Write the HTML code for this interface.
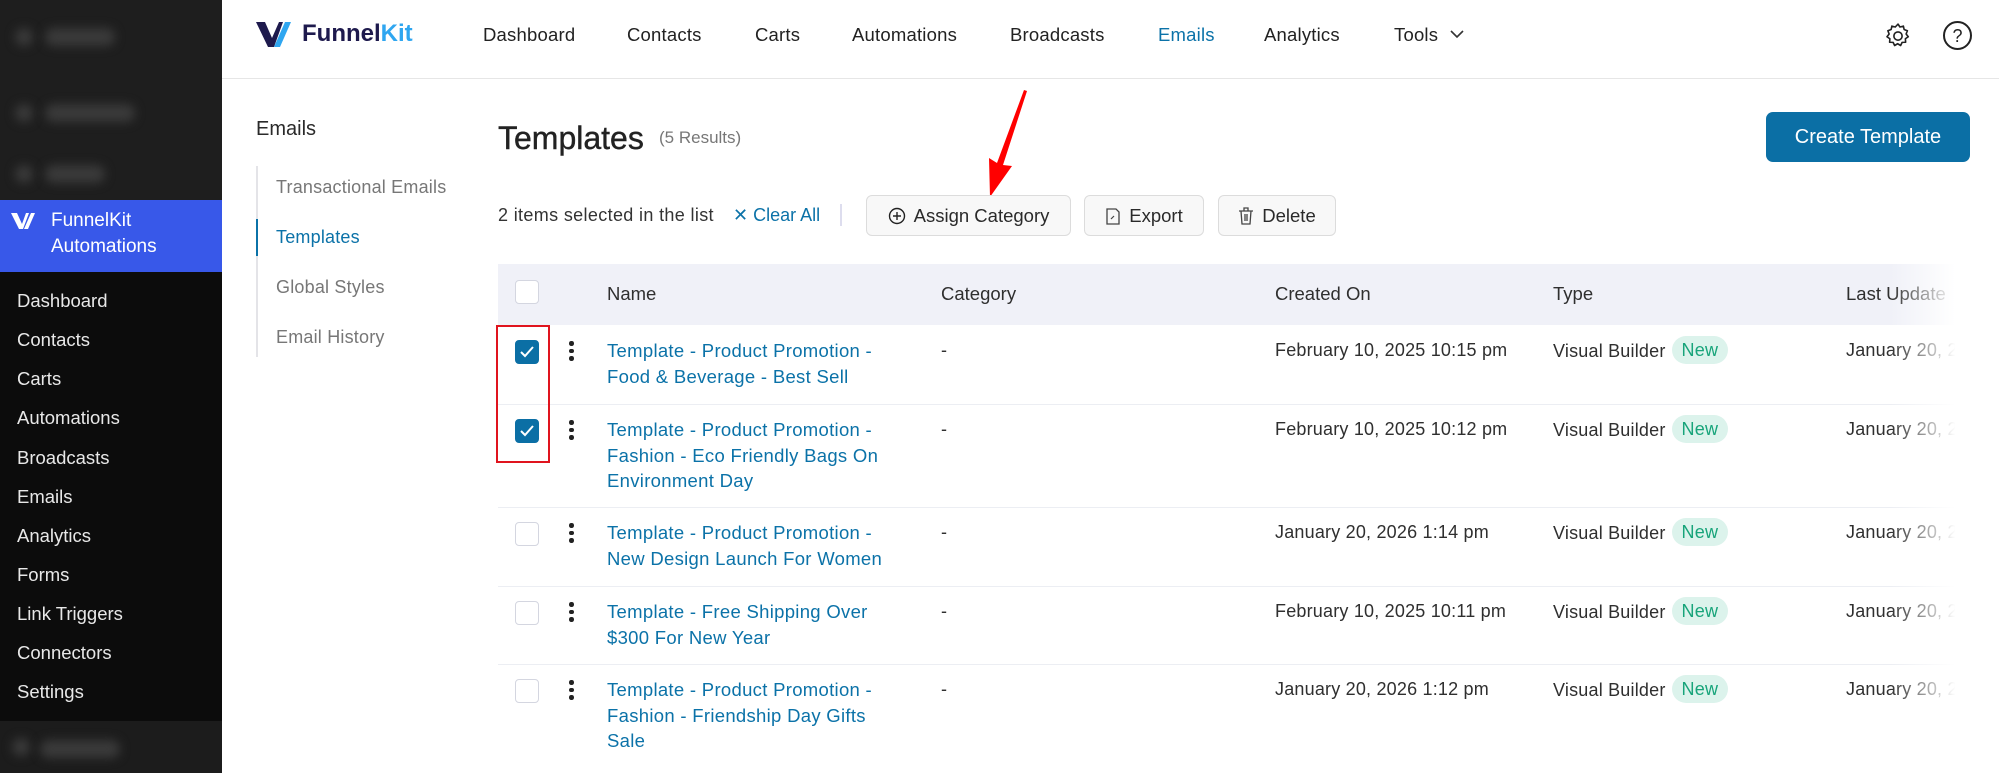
<!DOCTYPE html>
<html><head><meta charset="utf-8"><style>
*{margin:0;padding:0;box-sizing:border-box}
body{width:1999px;height:773px;overflow:hidden;background:#fff;font-family:"Liberation Sans",sans-serif;color:#2f2f2f;position:relative}
.a{position:absolute;white-space:nowrap}
.side{position:absolute;left:0;top:0;width:222px;height:773px;background:#0c0c0c}
.blur{position:absolute;left:0;top:0;width:222px;height:200px;background:#1e1e1e}
.bl{position:absolute;height:18px;border-radius:9px;background:#3a3a3a;filter:blur(5px)}
.band{position:absolute;left:0;top:200px;width:222px;height:72px;background:#3858e9;color:#fff;font-size:19px;line-height:26px}
.mi{position:absolute;left:17px;color:#e8e8e8;font-size:18.5px}
.nav{font-size:18.5px;color:#222;top:24px;letter-spacing:0.2px}
.sub{font-size:18px;color:#777;left:276px;letter-spacing:0.2px}
.btn{position:absolute;top:195px;height:41px;border:1px solid #dcdcdc;border-radius:6px;background:#f8f8f8;font-size:18.5px;color:#2a2a2a;display:flex;align-items:center;justify-content:center;gap:8px}
.th{font-size:18.5px;color:#2f2f2f;top:283px}
.cb{position:absolute;left:515px;width:24px;height:24px;border:1.5px solid #d4d6e0;border-radius:4px;background:#fff}
.cb.on{background:#0b6fa5;border-color:#0b6fa5}
.dots{position:absolute;left:569px;width:5px}
.dots i{display:block;width:4.5px;height:4.5px;border-radius:50%;background:#222;margin-bottom:3px}
.lk{position:absolute;left:607px;color:#0b72a8;font-size:18.5px;line-height:25.5px;letter-spacing:0.3px}
.td{position:absolute;font-size:18px;color:#2f2f2f;line-height:25.5px;letter-spacing:0.2px}
.new{display:inline-block;background:#dcf3ec;color:#17a47a;border-radius:14px;padding:0 10px;height:28px;line-height:28px;margin-left:6px;vertical-align:middle;position:relative;top:-2px}
.sep{position:absolute;left:498px;width:1501px;height:1px;background:#eceef3}
</style></head><body>
<div class="side">
 <div class="blur">
  <div class="bl" style="left:15px;top:28px;width:18px"></div><div class="bl" style="left:45px;top:28px;width:70px"></div>
  <div class="bl" style="left:15px;top:104px;width:18px"></div><div class="bl" style="left:45px;top:104px;width:90px"></div>
  <div class="bl" style="left:15px;top:165px;width:18px"></div><div class="bl" style="left:45px;top:165px;width:60px"></div>
 </div>
 <div class="band">
  <svg class="a" style="left:10px;top:11px" width="28" height="20" viewBox="0 0 28 20"><path d="M1 2h6l5 11L16 2h3l-6 16H9z" fill="#fff"/><path d="M21 2h4l-7 16h-4z" fill="#fff"/></svg>
  <div class="a" style="left:51px;top:8px">FunnelKit</div><div class="a" style="left:51px;top:34px">Automations</div>
 </div>
 <div class="mi" style="top:290px">Dashboard</div>
 <div class="mi" style="top:329px">Contacts</div>
 <div class="mi" style="top:368px">Carts</div>
 <div class="mi" style="top:407px">Automations</div>
 <div class="mi" style="top:447px">Broadcasts</div>
 <div class="mi" style="top:486px">Emails</div>
 <div class="mi" style="top:525px">Analytics</div>
 <div class="mi" style="top:564px">Forms</div>
 <div class="mi" style="top:603px">Link Triggers</div>
 <div class="mi" style="top:642px">Connectors</div>
 <div class="mi" style="top:681px">Settings</div>
 <div style="position:absolute;left:0;top:721px;width:222px;height:52px;background:#1c1c1c"><div class="bl" style="left:12px;top:17px;width:18px"></div><div class="bl" style="left:40px;top:19px;width:80px"></div></div>
</div>
<div style="position:absolute;left:222px;top:78px;width:1777px;height:1px;background:#e6e6e6"></div>
<svg class="a" style="left:256px;top:20px" width="40" height="30" viewBox="0 0 40 30"><path d="M0 2h9l7 16 7-16h4L18 27h-6z" fill="#1e1a4d"/><path d="M29 2h6L24 27h-6z" fill="#2fa6f0"/></svg>
<div class="a" style="left:302px;top:20px;font-size:24px;font-weight:bold;color:#1e1a4d">Funnel<span style="color:#2fa6f0">Kit</span></div>
<div class="a nav" style="left:483px">Dashboard</div>
<div class="a nav" style="left:627px">Contacts</div>
<div class="a nav" style="left:755px">Carts</div>
<div class="a nav" style="left:852px">Automations</div>
<div class="a nav" style="left:1010px">Broadcasts</div>
<div class="a nav" style="left:1158px;color:#0b72a8">Emails</div>
<div class="a nav" style="left:1264px">Analytics</div>
<div class="a nav" style="left:1394px">Tools</div>
<svg class="a" style="left:1449px;top:28px" width="16" height="12"><path d="M2 3l6 6 6-6" stroke="#333" stroke-width="1.6" fill="none"/></svg>
<svg class="a" style="left:1883px;top:21px" width="30" height="30" viewBox="0 0 24 24"><path d="M12 2.5l1.6 2.3 2.7-.7.6 2.7 2.6 1-1 2.6 1.7 2.2-2.3 1.6.2 2.8-2.8.1-1.2 2.5-2.4-1.4-2.4 1.4-1.2-2.5-2.8-.1.2-2.8-2.3-1.6 1.7-2.2-1-2.6 2.6-1 .6-2.7 2.7.7z" fill="none" stroke="#222" stroke-width="1.3" stroke-linejoin="round"/><circle cx="12" cy="12" r="3.3" fill="none" stroke="#222" stroke-width="1.3"/></svg>
<svg class="a" style="left:1942px;top:20px" width="31" height="31" viewBox="0 0 31 31"><circle cx="15.5" cy="15.5" r="13.5" fill="none" stroke="#222" stroke-width="2"/><text x="15.5" y="22" text-anchor="middle" font-family="Liberation Sans" font-size="18" fill="#222">?</text></svg>
<div class="a" style="left:256px;top:118px;font-size:20px;color:#2a2a2a">Emails</div>
<div style="position:absolute;left:256px;top:166px;width:2px;height:191px;background:#e4e4e8"></div>
<div style="position:absolute;left:256px;top:219px;width:2px;height:37px;background:#0b72a8"></div>
<div class="a sub" style="top:177px">Transactional Emails</div>
<div class="a sub" style="top:227px;color:#0b72a8">Templates</div>
<div class="a sub" style="top:277px">Global Styles</div>
<div class="a sub" style="top:327px">Email History</div>
<div class="a" style="left:498px;top:120px;font-size:32px;color:#222;-webkit-text-stroke:0.4px #222">Templates</div>
<div class="a" style="left:659px;top:128px;font-size:17px;color:#777">(5 Results)</div>
<div style="position:absolute;left:1766px;top:112px;width:204px;height:50px;border-radius:7px;background:#0b6fa5;color:#fff;font-size:20px;display:flex;align-items:center;justify-content:center">Create Template</div>
<div class="a" style="left:498px;top:205px;font-size:18px;color:#333;letter-spacing:0.35px">2 items selected in the list</div>
<div class="a" style="left:733px;top:205px;font-size:18px;color:#0b72a8">✕ Clear All</div>
<div style="position:absolute;left:840px;top:204px;width:2px;height:22px;background:#dde"></div>
<div class="btn" style="left:866px;width:205px"><svg width="18" height="18"><circle cx="9" cy="9" r="7.5" fill="none" stroke="#222" stroke-width="1.4"/><path d="M9 5v8M5 9h8" stroke="#222" stroke-width="1.4"/></svg>Assign Category</div>
<div class="btn" style="left:1084px;width:120px"><svg width="16" height="20"><path d="M2 3h9l3 3v12H2z" fill="none" stroke="#444" stroke-width="1.3"/><path d="M6 13l3-3" stroke="#444" stroke-width="1.2"/></svg>Export</div>
<div class="btn" style="left:1218px;width:118px"><svg width="16" height="20"><path d="M1 5h14M6 5V2h4v3M3 5l1 13h8l1-13M7 8v7M9 8v7" fill="none" stroke="#444" stroke-width="1.3"/></svg>Delete</div>
<svg class="a" style="left:970px;top:85px" width="70" height="110"><path d="M54 5L27 78l-8-5 1 39 22-31-9-1L57 6z" fill="#f00"/></svg>
<div style="position:absolute;left:498px;top:264px;width:1501px;height:61px;background:#f0f1f8"></div>
<div class="cb" style="top:280px"></div>
<div class="a th" style="left:607px">Name</div>
<div class="a th" style="left:941px">Category</div>
<div class="a th" style="left:1275px">Created On</div>
<div class="a th" style="left:1553px">Type</div>
<div class="a th" style="left:1846px">Last Update</div>
<div class="sep" style="top:404px"></div><div class="sep" style="top:507px"></div><div class="sep" style="top:586px"></div><div class="sep" style="top:664px"></div>
<div class="cb on" style="top:340px"><svg width="21" height="21"><path d="M5 11l4 4 8-9" stroke="#fff" stroke-width="2" fill="none"/></svg></div>
<div class="cb on" style="top:419px"><svg width="21" height="21"><path d="M5 11l4 4 8-9" stroke="#fff" stroke-width="2" fill="none"/></svg></div>
<div class="cb" style="top:522px"></div><div class="cb" style="top:601px"></div><div class="cb" style="top:679px"></div>
<div class="dots" style="top:341px"><i></i><i></i><i></i></div>
<div class="dots" style="top:420px"><i></i><i></i><i></i></div>
<div class="dots" style="top:523px"><i></i><i></i><i></i></div>
<div class="dots" style="top:602px"><i></i><i></i><i></i></div>
<div class="dots" style="top:680px"><i></i><i></i><i></i></div>
<div class="lk" style="top:338px">Template - Product Promotion -<br>Food &amp; Beverage - Best Sell</div>
<div class="lk" style="top:417px">Template - Product Promotion -<br>Fashion - Eco Friendly Bags On<br>Environment Day</div>
<div class="lk" style="top:520px">Template - Product Promotion -<br>New Design Launch For Women</div>
<div class="lk" style="top:599px">Template - Free Shipping Over<br>$300 For New Year</div>
<div class="lk" style="top:677px">Template - Product Promotion -<br>Fashion - Friendship Day Gifts<br>Sale</div>
<div class="td" style="left:941px;top:338px">-</div><div class="td" style="left:941px;top:417px">-</div><div class="td" style="left:941px;top:520px">-</div><div class="td" style="left:941px;top:599px">-</div><div class="td" style="left:941px;top:677px">-</div>
<div class="td" style="left:1275px;top:338px">February 10, 2025 10:15 pm</div>
<div class="td" style="left:1275px;top:417px">February 10, 2025 10:12 pm</div>
<div class="td" style="left:1275px;top:520px">January 20, 2026 1:14 pm</div>
<div class="td" style="left:1275px;top:599px">February 10, 2025 10:11 pm</div>
<div class="td" style="left:1275px;top:677px">January 20, 2026 1:12 pm</div>
<div class="td" style="left:1553px;top:338px">Visual Builder<span class="new">New</span></div>
<div class="td" style="left:1553px;top:417px">Visual Builder<span class="new">New</span></div>
<div class="td" style="left:1553px;top:520px">Visual Builder<span class="new">New</span></div>
<div class="td" style="left:1553px;top:599px">Visual Builder<span class="new">New</span></div>
<div class="td" style="left:1553px;top:677px">Visual Builder<span class="new">New</span></div>
<div class="td" style="left:1846px;top:338px">January 20, 2026</div>
<div class="td" style="left:1846px;top:417px">January 20, 2026</div>
<div class="td" style="left:1846px;top:520px">January 20, 2026</div>
<div class="td" style="left:1846px;top:599px">January 20, 2026</div>
<div class="td" style="left:1846px;top:677px">January 20, 2026</div>
<div style="position:absolute;left:1890px;top:264px;width:109px;height:509px;background:linear-gradient(90deg,rgba(255,255,255,0),#fff 60%)"></div>
<div style="position:absolute;left:496px;top:325px;width:54px;height:138px;border:2.5px solid #e0141e"></div>
</body></html>
